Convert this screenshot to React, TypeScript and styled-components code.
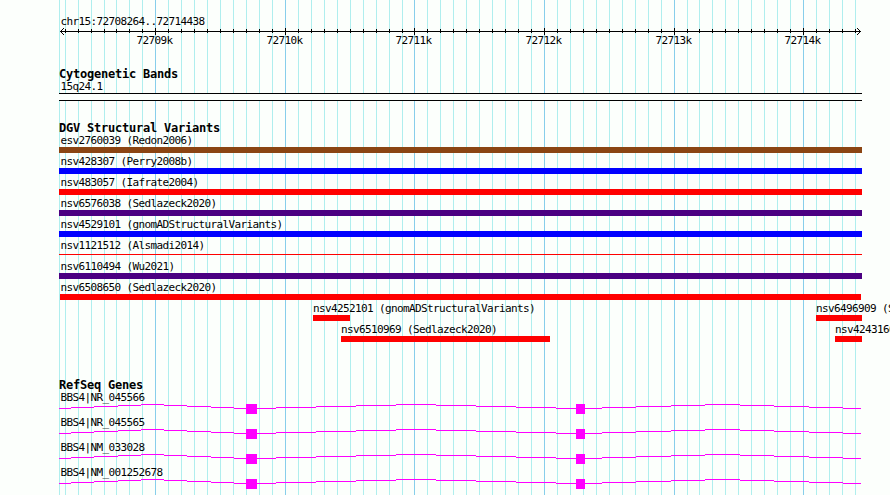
import React from "react";
import styled, { createGlobalStyle } from "styled-components";

interface IFeature {
  name: string;
  start: number;
  end: number;
}

interface IVariantRow {
  color: string;
  thin?: boolean;
  features: IFeature[];
}

const WIDTH = 890;
const HEIGHT = 495;
const TRACK_LEFT = 59;
const TRACK_RIGHT = 862;

const majorTicks = [
  { x: 155, label: "72709k" },
  { x: 285, label: "72710k" },
  { x: 414, label: "72711k" },
  { x: 544, label: "72712k" },
  { x: 674, label: "72713k" },
  { x: 803, label: "72714k" },
];

const minorTicks = [
  65, 78, 91, 104, 116, 129, 142, 168, 181, 194, 207, 220, 233, 246, 259, 272,
  298, 311, 324, 337, 350, 363, 376, 389, 402, 427, 440, 453, 466, 479, 492,
  505, 518, 531, 557, 570, 583, 596, 609, 622, 635, 648, 661, 687, 699, 712,
  725, 738, 751, 764, 777, 790, 816, 829, 842, 855,
];

const variantRows: IVariantRow[] = [
  {
    color: "#8b4513",
    features: [{ name: "esv2760039 (Redon2006)", start: 59, end: 862 }],
  },
  {
    color: "#0000ff",
    features: [{ name: "nsv428307 (Perry2008b)", start: 59, end: 862 }],
  },
  {
    color: "#ff0000",
    features: [{ name: "nsv483057 (Iafrate2004)", start: 59, end: 862 }],
  },
  {
    color: "#4b0082",
    features: [{ name: "nsv6576038 (Sedlazeck2020)", start: 59, end: 862 }],
  },
  {
    color: "#0000ff",
    features: [
      { name: "nsv4529101 (gnomADStructuralVariants)", start: 59, end: 862 },
    ],
  },
  {
    color: "#ff0000",
    thin: true,
    features: [{ name: "nsv1121512 (Alsmadi2014)", start: 59, end: 862 }],
  },
  {
    color: "#4b0082",
    features: [{ name: "nsv6110494 (Wu2021)", start: 59, end: 862 }],
  },
  {
    color: "#ff0000",
    features: [{ name: "nsv6508650 (Sedlazeck2020)", start: 60, end: 861 }],
  },
  {
    color: "#ff0000",
    features: [
      { name: "nsv4252101 (gnomADStructuralVariants)", start: 313, end: 350 },
      { name: "nsv6496909 (S", start: 816, end: 862 },
    ],
  },
  {
    color: "#ff0000",
    features: [
      { name: "nsv6510969 (Sedlazeck2020)", start: 341, end: 550 },
      { name: "nsv4243160", start: 835, end: 862 },
    ],
  },
];

const genes = [
  "BBS4|NR_045566",
  "BBS4|NR_045565",
  "BBS4|NM_033028",
  "BBS4|NM_001252678",
];

// every intron climbs four pixels and comes back down, one pixel per step
const introns = [
  [59, 71, 94, 118, 141, 164, 187, 211, 234, 246],
  [257, 276, 316, 356, 396, 436, 476, 516, 556, 576],
  [585, 602, 636, 671, 705, 740, 774, 809, 843, 861],
];
const intronLift = [0, 1, 2, 3, 4, 3, 2, 1, 0];
const exons = [
  { x: 246, width: 11 },
  { x: 576, width: 9 },
];

function Grid() {
  return (
    <GridLines width={WIDTH} height={HEIGHT} shapeRendering="crispEdges">
      {[TRACK_LEFT, ...minorTicks].map((x) => (
        <rect key={x} x={x} y={0} width={1} height={HEIGHT} fill="#afeeee" />
      ))}
      {majorTicks.map(({ x }) => (
        <rect key={x} x={x} y={0} width={1} height={HEIGHT} fill="#87ceeb" />
      ))}
    </GridLines>
  );
}

function Ruler() {
  return (
    <RulerDrawing width={WIDTH} height={20} shapeRendering="crispEdges">
      <rect x={60} y={4} width={801} height={1} />
      {minorTicks.map((x) => (
        <rect key={x} x={x} y={2} width={1} height={4} />
      ))}
      {majorTicks.map(({ x }) => (
        <rect key={x} x={x} y={1} width={1} height={7} />
      ))}
      {[1, 2, 3].map((d) => (
        <React.Fragment key={d}>
          <rect x={60 + d} y={4 - d} width={1} height={1} />
          <rect x={60 + d} y={4 + d} width={1} height={1} />
          <rect x={860 - d} y={4 - d} width={1} height={1} />
          <rect x={860 - d} y={4 + d} width={1} height={1} />
        </React.Fragment>
      ))}
      {majorTicks.map(({ x, label }) => (
        <TickText key={label} x={x - 18.5} y={17}>
          {label}
        </TickText>
      ))}
    </RulerDrawing>
  );
}

function Variants({ row }: { row: IVariantRow }) {
  return (
    <VariantRow>
      {row.features.map((feature, i) => {
        const previous = i === 0 ? 0 : row.features[i - 1].end;
        return (
          <Feature
            key={feature.name}
            $gap={feature.start - previous}
            $width={feature.end - feature.start}
          >
            <Label $shift={Math.max(0, 60.5 - feature.start)}>
              {feature.name}
            </Label>
            <Bar $color={row.color} $thin={row.thin} />
          </Feature>
        );
      })}
    </VariantRow>
  );
}

function Gene({ name }: { name: string }) {
  return (
    <GeneRow>
      <Label $shift={60.5}>{name}</Label>
      <GeneModel width={WIDTH} height={10} shapeRendering="crispEdges">
        {introns.map((steps) =>
          intronLift.map((lift, i) => (
            <rect
              key={steps[i]}
              x={steps[i]}
              y={4 - lift}
              width={steps[i + 1] - steps[i]}
              height={1}
            />
          ))
        )}
        {exons.map(({ x, width }) => (
          <rect key={x} x={x} y={0} width={width} height={10} />
        ))}
      </GeneModel>
    </GeneRow>
  );
}

export default function App() {
  return (
    <Browser>
      <GlobalStyle />
      <Grid />
      <Tracks>
        <RegionTrack>
          <Label $shift={60.5}>chr15:72708264..72714438</Label>
          <Ruler />
        </RegionTrack>
        <Track $space={20}>
          <Title>Cytogenetic Bands</Title>
          <BandLabel>15q24.1</BandLabel>
          <Band />
        </Track>
        <Track $space={20}>
          <Title>DGV Structural Variants</Title>
          {variantRows.map((row) => (
            <Variants key={row.features[0].name} row={row} />
          ))}
        </Track>
        <Track $space={36}>
          <Title>RefSeq Genes</Title>
          {genes.map((name) => (
            <Gene key={name} name={name} />
          ))}
        </Track>
      </Tracks>
    </Browser>
  );
}

const GlobalStyle = createGlobalStyle`
  body {
    margin: 0;
    background: #fcfffc;
  }
`;

const Browser = styled.div`
  position: relative;
  width: ${WIDTH}px;
  height: ${HEIGHT}px;
  overflow: hidden;
  background: #fcfffc;
  color: black;
  font-family: "DejaVu Sans Mono", "Liberation Mono", monospace;
  font-size: 11px;
  letter-spacing: -0.622px;
`;

const GridLines = styled.svg`
  position: absolute;
  top: 0;
  left: 0;
`;

const Tracks = styled.div`
  position: relative;
  display: flex;
  flex-direction: column;
  padding-top: 13px;
`;

const RegionTrack = styled.div`
  height: 34px;
`;

const RulerDrawing = styled.svg`
  display: block;
  margin-top: -1px;
`;

const TickText = styled.text`
  font-size: 11px;
  letter-spacing: -0.622px;
`;

const Track = styled.div<{ $space: number }>`
  padding-top: ${({ $space }) => $space}px;
`;

const Title = styled.div`
  height: 11px;
  padding-left: ${TRACK_LEFT}px;
  font-size: 12px;
  font-weight: bold;
  letter-spacing: -0.224px;
  line-height: 15px;
  white-space: nowrap;
`;

const Label = styled.div<{ $shift: number }>`
  height: 15px;
  margin-left: ${({ $shift }) => $shift}px;
  line-height: 18px;
  white-space: nowrap;
`;

const BandLabel = styled.div`
  height: 15px;
  padding-left: 60.5px;
  line-height: 18px;
  white-space: nowrap;
`;

const Band = styled.div`
  box-sizing: border-box;
  width: ${TRACK_RIGHT - TRACK_LEFT}px;
  height: 8px;
  margin-left: ${TRACK_LEFT}px;
  border: solid black;
  border-width: 1px 0;
  background: #fcfffc;
`;

const VariantRow = styled.div`
  display: flex;
  height: 21px;
`;

const Feature = styled.div<{ $gap: number; $width: number }>`
  flex: none;
  width: ${({ $width }) => $width}px;
  margin-left: ${({ $gap }) => $gap}px;
`;

const Bar = styled.div<{ $color: string; $thin?: boolean }>`
  height: ${({ $thin }) => ($thin ? 1 : 6)}px;
  margin-top: ${({ $thin }) => ($thin ? 2 : 0)}px;
  background: ${({ $color }) => $color};
`;

const GeneRow = styled.div`
  height: 25px;
`;

const GeneModel = styled.svg`
  display: block;
  fill: #ff00ff;
`;
